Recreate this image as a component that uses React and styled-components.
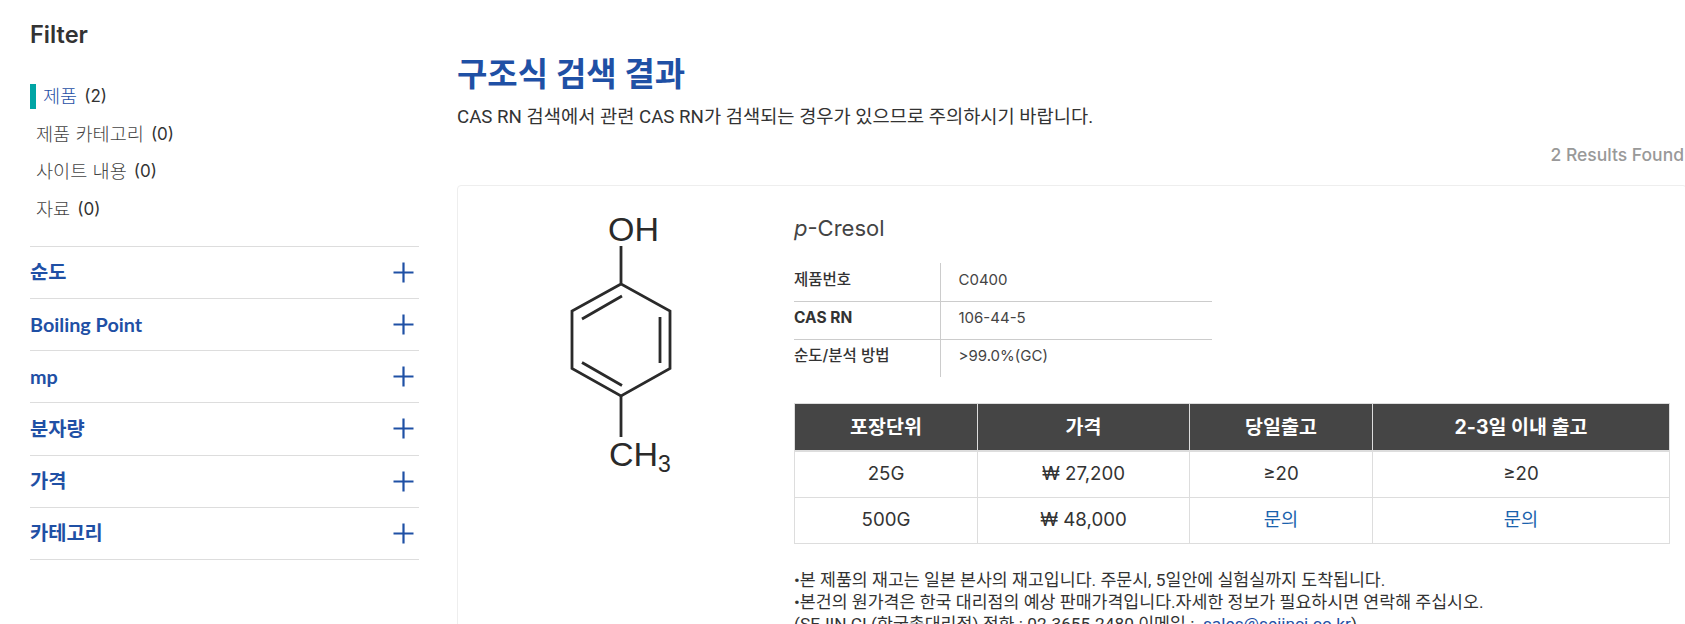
import styled, { createGlobalStyle } from 'styled-components';

const GlobalStyle = createGlobalStyle`
   html, body {
      margin: 0;
      height: 624px;
      overflow: hidden;
      background: #fff;
   }
   body {
      font-family: Inter, "Noto Sans CJK KR", sans-serif;
      color: #333;
   }
   * {
      box-sizing: border-box;
   }
`;

const Page = styled.div`
   display: flex;
   width: 1685px;
   padding-left: 30px;
`;

const Sidebar = styled.aside`
   flex: 0 0 389px;
   padding-top: 22px;
`;

const FilterTitle = styled.h2`
   margin: 0 0 36px;
   font: 600 23.6px/26px Inter, "Noto Sans CJK KR", sans-serif;
   color: #333;
`;

const CategoryList = styled.ul`
   list-style: none;
   margin: 0 0 24px;
   padding: 0;
`;

const Category = styled.li`
   display: flex;
   align-items: center;
   height: 25px;
   margin-bottom: 12.6px;
   padding-left: ${props => (props.$active ? '7px' : '6px')};
   border-left: ${props => (props.$active ? '6px solid #00a5a5' : 'none')};
   font: 400 17px/25px Inter, "Noto Sans CJK KR", sans-serif;
   color: #333;

   span {
      margin-right: 7px;
      font-size: 18.6px;
      font-weight: 300;
      color: ${props => (props.$active ? '#1f50a5' : '#444')};
   }
`;

const Accordion = styled.div`
   border-top: 1px solid #ddd;
`;

const AccordionRow = styled.div`
   display: flex;
   justify-content: space-between;
   align-items: center;
   height: 52.2px;
   padding: 0 5px 2px 0;
   border-bottom: 1px solid #ddd;
   font: 700 19.8px/24px Lato, "Noto Sans CJK KR", sans-serif;
   color: #1f50a5;

   svg {
      display: block;
      transform: translateY(1px);
   }
`;

const Main = styled.main`
   flex: 0 0 1230px;
   margin-left: 38px;
   padding-top: 53px;
`;

const Title = styled.h1`
   margin: 0;
   font: 700 33px/42px Inter, "Noto Sans CJK KR", sans-serif;
   color: #1f50a5;
`;

const Lead = styled.p`
   margin: 8px 0 0;
   font: 400 18.7px/28px Roboto, "Noto Sans CJK KR", sans-serif;
   color: #333;
`;

const ResultCount = styled.div`
   margin: 12px 0 0;
   padding-right: 3px;
   text-align: right;
   font: 500 17.5px/24px Inter, sans-serif;
   color: #999;
`;

const Card = styled.section`
   display: flex;
   margin-top: 18px;
   padding: 0 0 0 54px;
   border: 1px solid #eee;
   border-radius: 4px;
   height: 470px;
`;

const Structure = styled.svg`
   flex: 0 0 282px;
   width: 282px;
   height: 290px;
   margin-top: 13px;
`;

const Details = styled.div`
   flex: 0 0 875px;
   padding-top: 27px;
`;

const ProductName = styled.h3`
   margin: 0 0 20px;
   font: 400 22px/30px Inter, "Noto Sans CJK KR", sans-serif;
   color: #444;

   i {
      font-style: italic;
   }
`;

const SpecTable = styled.table`
   width: 418px;
   border-collapse: collapse;
   table-layout: fixed;

   th, td {
      height: 38px;
      padding: 0 0 4px;
      text-align: left;
      color: #333;
   }
   th {
      width: 146px;
      font: 500 15.5px/20px Inter, "Noto Sans CJK KR", sans-serif;
      border-right: 1px solid #ccc;
   }
   td {
      padding-left: 18px;
      color: #444;
      font: 400 15px/20px Inter, "Noto Sans CJK KR", sans-serif;
   }
   tr + tr th, tr + tr td {
      border-top: 1px solid #ccc;
   }
`;

const StrongLabel = styled.th`
   && {
      font-weight: 700;
   }
`;

const StockTable = styled.table`
   width: 875px;
   margin-top: 26px;
   border-collapse: collapse;
   table-layout: fixed;

   th {
      height: 47px;
      background: #454545;
      color: #fff;
      font: 700 19.5px/24px Inter, "Noto Sans CJK KR", sans-serif;
      border: 1px solid #ddd;
      border-bottom-width: 2px;
   }
   td {
      height: 46.5px;
      text-align: center;
      border: 1px solid #ddd;
      font: 400 18.7px/24px Inter, "Noto Sans CJK KR", sans-serif;
      color: #333;
   }
`;

const InquiryLink = styled.a`
   color: #1a62ad;
   text-decoration: none;
`;

const Notes = styled.div`
   margin-top: 25px;
   font: 400 17.3px/22px Roboto, "Noto Sans CJK KR", sans-serif;
   color: #333;

   a {
      color: #1f50a5;
      text-decoration: none;
   }
`;

const PlusIcon = () => (
   <svg width="21" height="21" viewBox="0 0 21 21">
      <path d="M10.5 0.5v20M0.5 10.5h20" stroke="#1f50a5" strokeWidth="2.200" fill="none" />
   </svg>
);

const StructureDrawing = () => (
   <Structure viewBox="0 0 282 290">
      <g stroke="#2a2a2a" strokeWidth="2.800" fill="none">
         <path d="M109 47V85L158 112V169.500L109 197L60 169.500V112L109 85" />
         <path d="M70 120L110 97M148 118V164M70 163.500L110 186.500M109 197V238" />
      </g>
      <g fontFamily="'Liberation Sans', sans-serif" fontSize="34" fill="#2a2a2a">
         <text x="96" y="42">OH</text>
         <text x="97" y="267">
            CH<tspan fontSize="23" dy="6">3</tspan>
         </text>
      </g>
   </Structure>
);

const filters = ['순도', 'Boiling Point', 'mp', '분자량', '가격', '카테고리'];

export default function App() {
   return (
      <Page>
         <GlobalStyle />
         <Sidebar>
            <FilterTitle>Filter</FilterTitle>
            <CategoryList>
               <Category $active>
                  <span>제품</span>(2)
               </Category>
               <Category>
                  <span>제품 카테고리</span>(0)
               </Category>
               <Category>
                  <span>사이트 내용</span>(0)
               </Category>
               <Category>
                  <span>자료</span>(0)
               </Category>
            </CategoryList>
            <Accordion>
               {filters.map(name => (
                  <AccordionRow key={name}>
                     {name}
                     <PlusIcon />
                  </AccordionRow>
               ))}
            </Accordion>
         </Sidebar>
         <Main>
            <Title>구조식 검색 결과</Title>
            <Lead>CAS RN 검색에서 관련 CAS RN가 검색되는 경우가 있으므로 주의하시기 바랍니다.</Lead>
            <ResultCount>2 Results Found</ResultCount>
            <Card>
               <StructureDrawing />
               <Details>
                  <ProductName>
                     <i>p</i>-Cresol
                  </ProductName>
                  <SpecTable>
                     <tbody>
                        <tr>
                           <th>제품번호</th>
                           <td>C0400</td>
                        </tr>
                        <tr>
                           <StrongLabel>CAS RN</StrongLabel>
                           <td>106-44-5</td>
                        </tr>
                        <tr>
                           <th>순도/분석 방법</th>
                           <td>&gt;99.0%(GC)</td>
                        </tr>
                     </tbody>
                  </SpecTable>
                  <StockTable>
                     <colgroup>
                        <col width="183" />
                        <col width="212" />
                        <col width="183" />
                        <col width="297" />
                     </colgroup>
                     <thead>
                        <tr>
                           <th>포장단위</th>
                           <th>가격</th>
                           <th>당일출고</th>
                           <th>2-3일 이내 출고</th>
                        </tr>
                     </thead>
                     <tbody>
                        <tr>
                           <td>25G</td>
                           <td>₩ 27,200</td>
                           <td>≥20</td>
                           <td>≥20</td>
                        </tr>
                        <tr>
                           <td>500G</td>
                           <td>₩ 48,000</td>
                           <td>
                              <InquiryLink href="#">문의</InquiryLink>
                           </td>
                           <td>
                              <InquiryLink href="#">문의</InquiryLink>
                           </td>
                        </tr>
                     </tbody>
                  </StockTable>
                  <Notes>
                     •본 제품의 재고는 일본 본사의 재고입니다. 주문시, 5일안에 실험실까지 도착됩니다.
                     <br />
                     •본건의 원가격은 한국 대리점의 예상 판매가격입니다.자세한 정보가 필요하시면 연락해 주십시오.
                     <br />
                     (SEJIN CI (한국총대리점) 전화 : 02-3655-2480 이메일 :&nbsp; <a href="#">sales@sejinci.co.kr</a>)
                  </Notes>
               </Details>
            </Card>
         </Main>
      </Page>
   );
}
